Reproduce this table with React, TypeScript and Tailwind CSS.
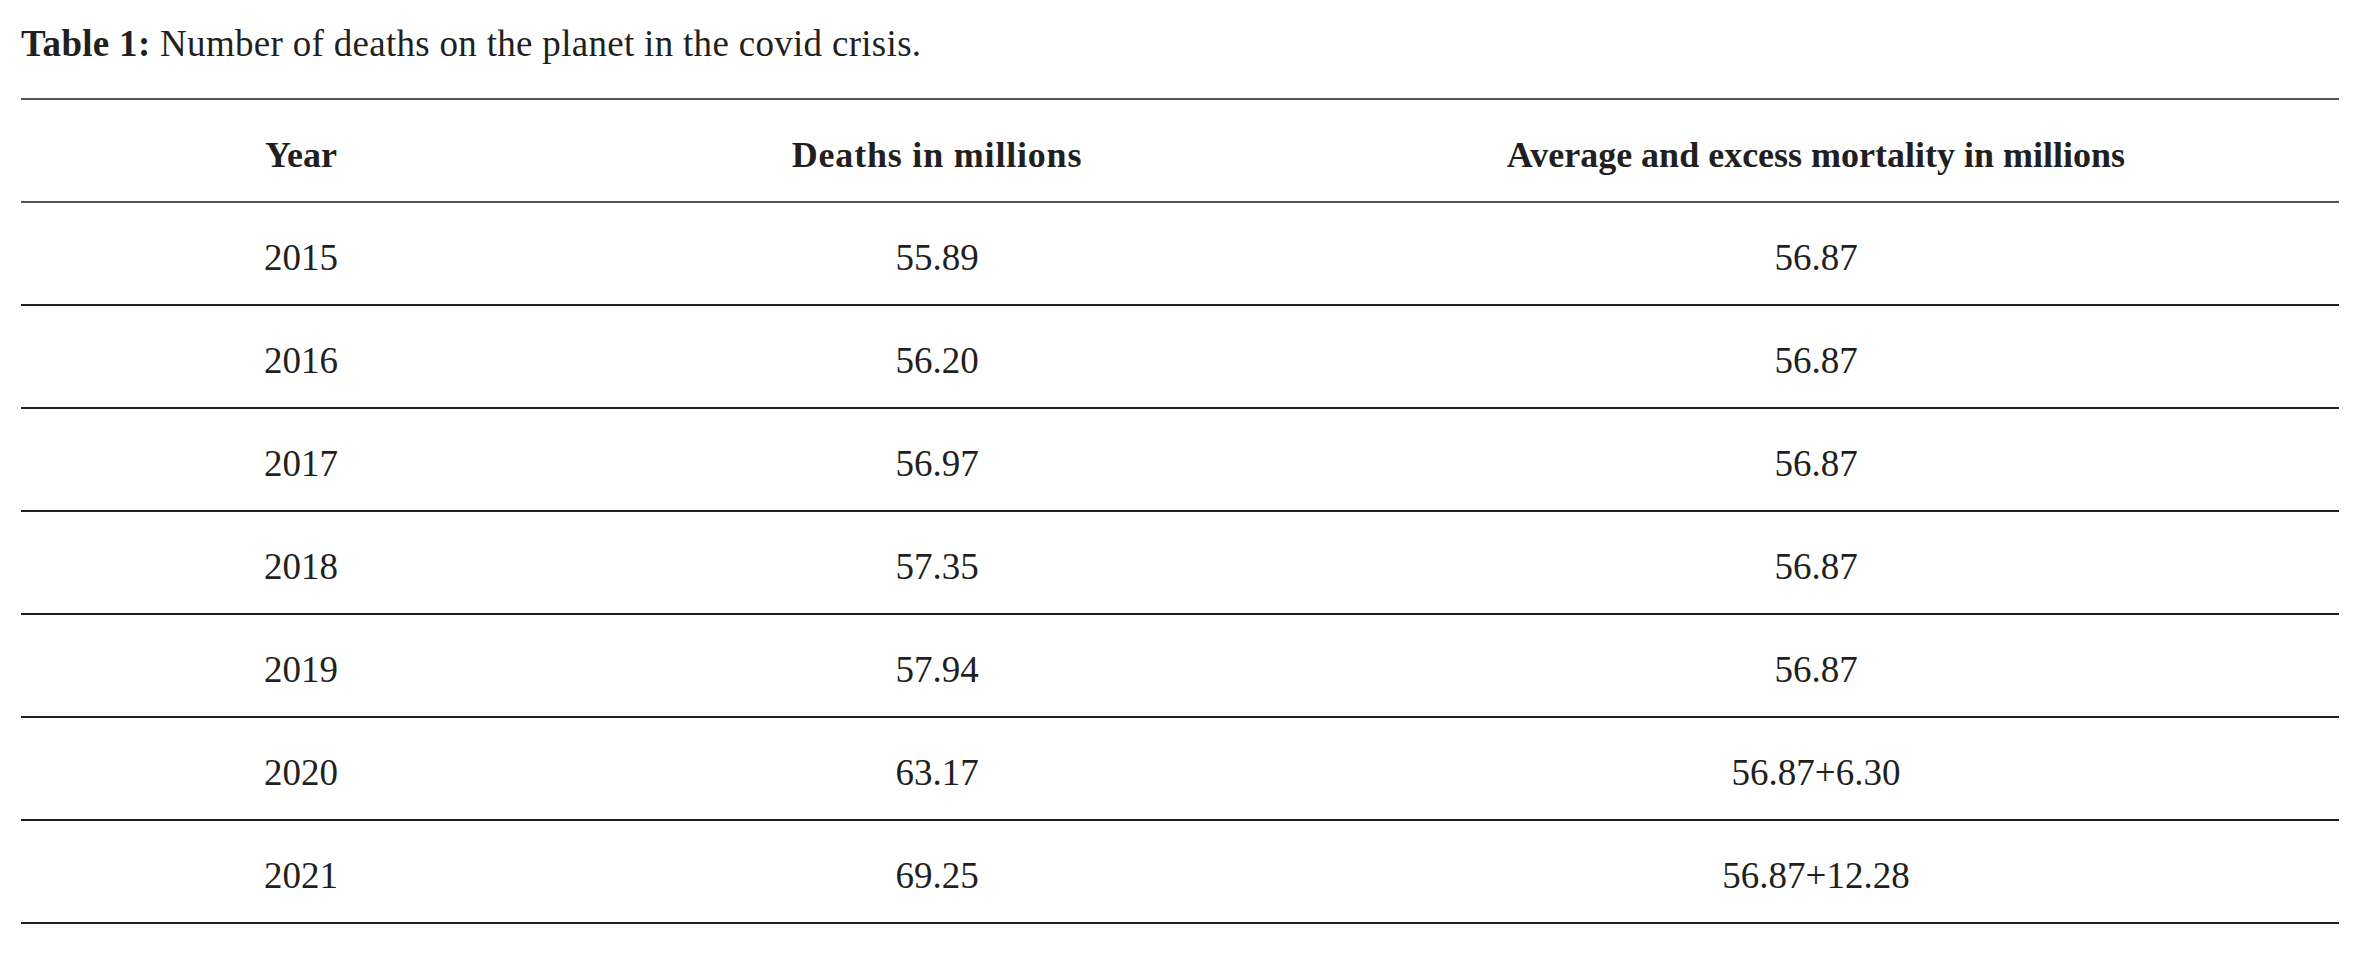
import React from 'react';

// Table data, as printed
const rows: [string, string, string][] = [
  ['2015', '55.89', '56.87'],
  ['2016', '56.20', '56.87'],
  ['2017', '56.97', '56.87'],
  ['2018', '57.35', '56.87'],
  ['2019', '57.94', '56.87'],
  ['2020', '63.17', '56.87+6.30'],
  ['2021', '69.25', '56.87+12.28'],
];

const serif = { fontFamily: '"Liberation Serif", "DejaVu Serif", serif' };

export default function App() {
  return (
    <div className="min-h-[964px] bg-white px-[21px] text-[#231f20]" style={serif}>
      {/* Caption */}
      <p className="pt-[23px] text-[37px] leading-[42px] tracking-[0.3px]">
        <span className="font-bold">Table 1:</span> Number of deaths on the planet in the covid crisis.
      </p>

      {/* Table */}
      <div className="mt-[33px] w-[2318px] border-t-2 border-[#555555]">
        <div className="grid h-[103px] grid-cols-[560px_712px_1fr] items-center border-b-2 border-[#555555] pt-2 text-[36px] font-bold">
          <div className="text-center">Year</div>
          <div className="text-center tracking-[0.8px]">Deaths in millions</div>
          <div className="text-center">Average and excess mortality in millions</div>
        </div>
        {rows.map(([year, deaths, avg]) => (
          <div
            key={year}
            className="grid h-[103px] grid-cols-[560px_712px_1fr] items-center border-b-2 border-[#231f20] pt-2 text-[37px]"
          >
            <div className="text-center">{year}</div>
            <div className="text-center">{deaths}</div>
            <div className="text-center">{avg}</div>
          </div>
        ))}
      </div>
    </div>
  );
}
